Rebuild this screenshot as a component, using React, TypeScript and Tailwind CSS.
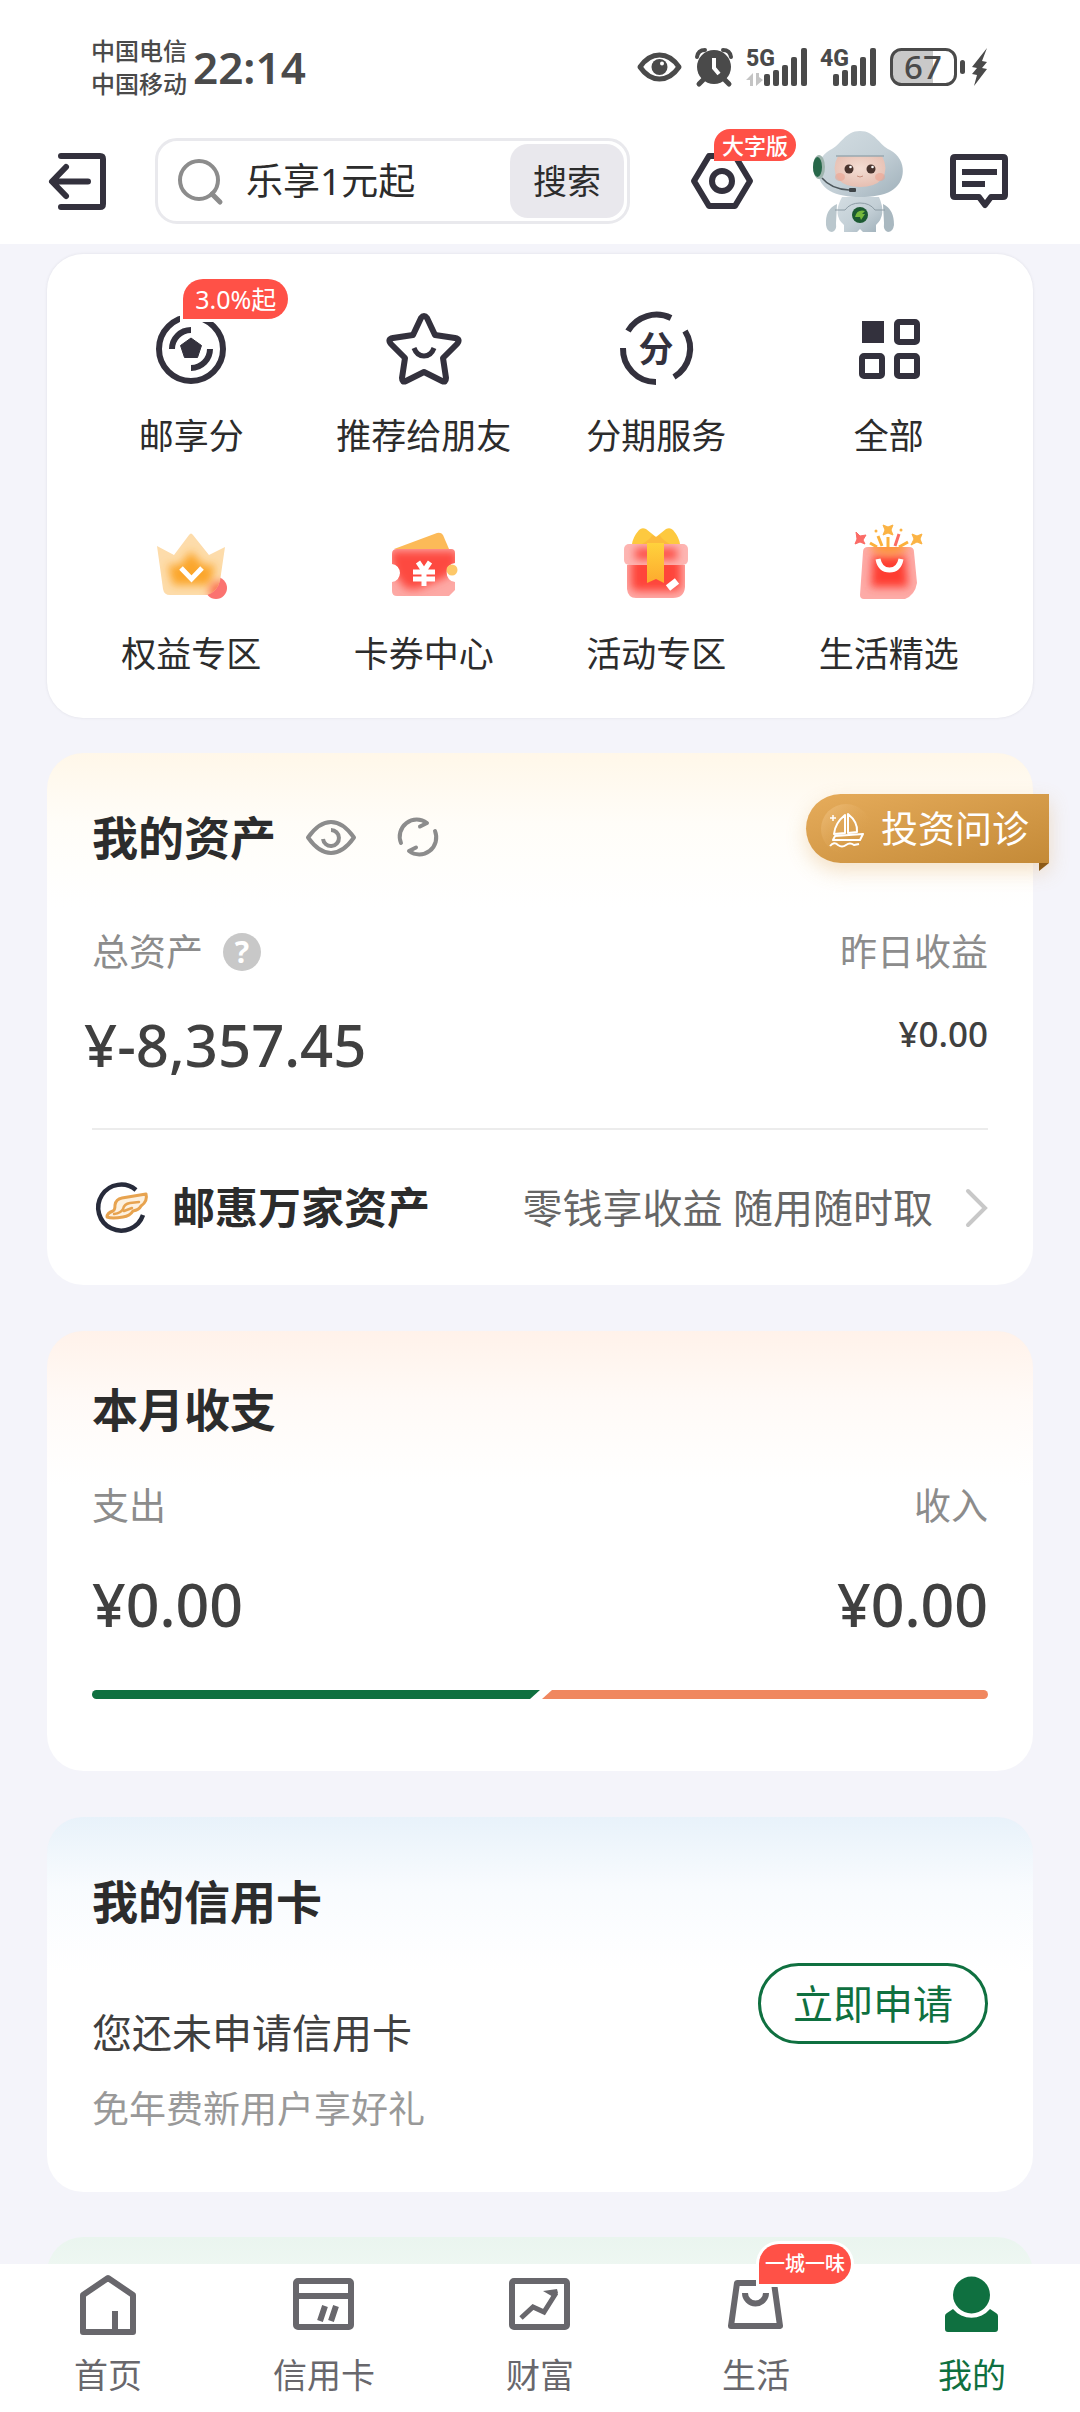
import type { ReactNode } from 'react';

const ink = '#33313d';

function Svg({ w, h, children }: { w: number; h: number; children: ReactNode }) {
    return (
        <svg width={w} height={h} viewBox={`0 0 ${w} ${h}`} fill="none" className="block shrink-0 overflow-visible" aria-hidden="true">
            {children}
        </svg>
    );
}

function Signal({ label, data }: { label: string; data?: boolean }) {
    const x = data ? 18 : 13;
    return (
        <Svg w={data ? 61 : 57} h={38}>
            <text x="0" y="18" fontSize="23" fontWeight="800" fill="#4a4a4a" className="font-['Roboto',sans-serif]">{label}</text>
            {data && <path d="M0 32L7 25V38H4V32ZM10 25V38L17 32L13 29V25Z" fill="#c4c4c4" />}
            <g fill="#4a4a4a">
                <rect x={x} y="26" width="6" height="12" rx="2" />
                <rect x={x + 9} y="22" width="6" height="16" rx="2" />
                <rect x={x + 18} y="17" width="6" height="21" rx="2" />
                <rect x={x + 27} y="9" width="6" height="29" rx="2" />
                <rect x={x + 37} y="0" width="6" height="38" rx="2" />
            </g>
        </Svg>
    );
}

function StatusBar() {
    return (
        <div className="flex h-[118px] items-center justify-between pt-4 pl-[91px] pr-[93px] text-[#4a4a4a]">
            <div className="flex items-center gap-1.5">
                <div className="text-[24px] leading-[33px] font-medium">
                    <div>中国电信</div>
                    <div>中国移动</div>
                </div>
                <time className="text-[44px] leading-[60px] font-semibold">22:14</time>
            </div>
            <div className="flex items-center gap-[13px]">
                <Svg w={45} h={30}>
                    <path d="M3 15C14 -1 31 -1 42 15C31 31 14 31 3 15Z" stroke="#4a4a4a" strokeWidth="5" strokeLinejoin="round" />
                    <circle cx="22.500" cy="15" r="8" fill="#4a4a4a" />
                    <circle cx="25" cy="11.500" r="2" fill="#fff" />
                </Svg>
                <Svg w={38} h={38}>
                    <circle cx="19" cy="19" r="17" fill="#4a4a4a" />
                    <path d="M8 32L4 36M30 32L34 36" stroke="#4a4a4a" strokeWidth="5" strokeLinecap="round" />
                    <path d="M2 9Q3 2 10 2M36 9Q35 2 28 2" stroke="#4a4a4a" strokeWidth="4" strokeLinecap="round" />
                    <path d="M19 10V20L24 26" stroke="#fff" strokeWidth="4" />
                </Svg>
                <Signal label="5G" data />
                <Signal label="4G" />
                <Svg w={97} h={38}>
                    <path d="M10 2H43V36H10Q2 36 2 28V10Q2 2 10 2Z" fill="#c9c9c9" />
                    <rect x="1.500" y="1.500" width="64" height="35" rx="10" stroke="#4a4a4a" strokeWidth="3" />
                    <text x="33" y="31" textAnchor="middle" fontSize="33" fontWeight="500" fill="#4a4a4a">67</text>
                    <rect x="70" y="12" width="5" height="14" rx="2.500" fill="#4a4a4a" />
                    <path d="M97 0L82 19L87 20L82 26L87 27L84 38L97 21L92 20L97 14L92 13Z" fill="#4a4a4a" />
                </Svg>
            </div>
        </div>
    );
}

function Robot() {
    return (
        <Svg w={90} h={101}>
            <defs>
                <linearGradient id="helmet" x1="0" y1="0" x2="1" y2="1">
                    <stop offset="0" stopColor="#d3dde2" />
                    <stop offset="0.550" stopColor="#c3cfd6" />
                    <stop offset="1" stopColor="#9fb0ba" />
                </linearGradient>
                <radialGradient id="face" cx="0.5" cy="0.4" r="0.6">
                    <stop offset="0" stopColor="#f3ddd3" />
                    <stop offset="1" stopColor="#e6bfb2" />
                </radialGradient>
            </defs>
            <path d="M24 73Q12 78 13 94Q14 101 19 101Q24 100 23 92Z" fill="#bac7cd" />
            <path d="M70 73Q81 78 81 94Q80 101 75 101Q70 100 71 92Z" fill="#a9b8c0" />
            <path d="M29 66H66Q74 84 63 94V101H50L47 98L44 101H31V94Q19 84 29 66Z" fill="url(#helmet)" />
            <path d="M22 79H32Q37 72 47 72Q57 72 62 79H72" stroke="#8d9ca5" strokeWidth="1" />
            <path d="M47 0C62 0 66 14 77 19C95 29 93 52 78 60C64 68 31 68 17 60C2 52 0 29 17 19C28 14 32 0 47 0Z" fill="url(#helmet)" />
            <path d="M25 25H69Q76 38 69 48Q62 56 47 56Q32 56 25 48Q18 38 25 25Z" fill="url(#face)" />
            <path d="M23 25H71" stroke="#99a8b1" strokeWidth="1.500" />
            <ellipse cx="27" cy="46" rx="5" ry="4" fill="#eba491" opacity="0.600" />
            <ellipse cx="67" cy="46" rx="5" ry="4" fill="#eba491" opacity="0.600" />
            <circle cx="36" cy="38" r="4.500" fill="#49342e" />
            <circle cx="58" cy="38" r="4.500" fill="#49342e" />
            <circle cx="37.500" cy="36" r="1.300" fill="#fff" />
            <circle cx="59.500" cy="36" r="1.300" fill="#fff" />
            <path d="M44 45Q47 47 50 45" stroke="#c68d7d" strokeWidth="1" />
            <ellipse cx="6" cy="36" rx="6" ry="12" fill="#9fb5ae" />
            <ellipse cx="4.500" cy="36" rx="4.500" ry="10" fill="#28684a" />
            <path d="M9 47Q18 58 36 59" stroke="#4c565b" strokeWidth="1.500" />
            <rect x="36" y="57" width="7" height="4" rx="1" fill="#3e4448" />
            <circle cx="47" cy="84" r="8" fill="#1c5a32" />
            <path d="M42 86Q44 78 52 80L49 83H52L48 89L47 86Z" fill="#74b83c" />
        </Svg>
    );
}

function Header() {
    return (
        <header className="shrink-0 bg-white">
            <StatusBar />
            <div className="flex h-[126px] items-center pl-[49px] pr-[72px]">
                <button aria-label="退出" className="mr-[49px]">
                    <Svg w={57} h={57}>
                        <path d="M12 3H51Q54 3 54 6V51Q54 54 51 54H12M39 28.500H4M17 14L3 28.500L17 43" stroke={ink} strokeWidth="6" strokeLinecap="round" strokeLinejoin="round" />
                    </Svg>
                </button>
                <form onSubmit={(e) => e.preventDefault()} className="mr-[61px] flex h-[86px] min-w-0 flex-1 items-center rounded-[22px] border-[3px] border-[#e9e9ed] pl-5 pr-[3px]">
                    <Svg w={44} h={45}>
                        <path d="M34 35L42 43" stroke="#8c8c8c" strokeWidth="5" strokeLinecap="round" />
                        <circle cx="21" cy="21" r="19" stroke="#8c8c8c" strokeWidth="4" />
                    </Svg>
                    <input
                        aria-label="搜索"
                        placeholder="乐享1元起"
                        className="ml-6 w-0 min-w-0 flex-1 bg-transparent text-[37px] leading-[52px] text-[#2c2c2c] outline-none placeholder:text-[#2c2c2c] placeholder:opacity-100"
                    />
                    <button type="submit" className="h-[74px] rounded-[18px] bg-[#e9e8ed] px-[23px] text-[34px] leading-[52px] text-[#2c2c2c]">搜索</button>
                </form>
                <button aria-label="设置" className="relative mr-[60px]">
                    <Svg w={62} h={56}>
                        <path d="M18 3H44L59 28L44 53H18L3 28Z" stroke={ink} strokeWidth="6" strokeLinejoin="round" />
                        <circle cx="31" cy="28" r="10" stroke={ink} strokeWidth="6" />
                    </Svg>
                    <span className="absolute -top-6 left-[23px] rounded-full rounded-bl-none bg-[#ff5147] px-2 text-[22px] leading-8 font-medium whitespace-nowrap text-white">大字版</span>
                </button>
                <button aria-label="客服" className="mr-[47px]">
                    <Robot />
                </button>
                <button aria-label="消息">
                    <Svg w={58} h={54}>
                        <path d="M5 3H53Q55 3 55 5V41Q55 43 53 43H41L35 51L29 43H5Q3 43 3 41V5Q3 3 5 3Z" stroke={ink} strokeWidth="6" strokeLinejoin="round" />
                        <path d="M12 18H47M12 30H35" stroke={ink} strokeWidth="6" />
                    </Svg>
                </button>
            </div>
        </header>
    );
}

const shortcuts: { label: string; badge?: string; icon: ReactNode }[] = [
    {
        label: '邮享分',
        badge: '3.0%起',
        icon: (
            <>
                <circle cx="38" cy="38" r="32" stroke={ink} strokeWidth="6" />
                <path d="M38 19A19 19 0 0 0 19 38M57 38A19 19 0 0 1 38 57" stroke={ink} strokeWidth="6" />
                <path d="M38 27L48.500 34.500L44.500 46.500H31.500L27.500 34.500Z" fill={ink} stroke={ink} strokeLinejoin="round" />
            </>
        ),
    },
    {
        label: '推荐给朋友',
        icon: (
            <>
                <path d="M35 7Q38 3 41 7L49 24L69 27Q75 28 71 33L57 47L60 67Q60 72 56 70L38 61L20 70Q16 72 16 67L19 47L5 33Q1 28 7 27L27 24Z" stroke={ink} strokeWidth="6" strokeLinejoin="round" />
                <path d="M28 37Q31 45 38 45Q45 45 48 37" stroke={ink} strokeWidth="5" />
            </>
        ),
    },
    {
        label: '分期服务',
        icon: (
            <>
                <path d="M10 20A33 33 0 0 1 53 7M67 20A33 33 0 0 1 56 66M5 37A33 33 0 0 0 38 71" stroke={ink} strokeWidth="6" />
                <text x="38" y="51" textAnchor="middle" fontSize="35" fontWeight="700" fill={ink}>分</text>
            </>
        ),
    },
    {
        label: '全部',
        icon: (
            <>
                <rect x="11" y="10" width="22" height="22" fill={ink} />
                <rect x="46" y="11" width="20" height="20" rx="2" stroke={ink} strokeWidth="6" />
                <rect x="11" y="45" width="20" height="20" rx="2" stroke={ink} strokeWidth="6" />
                <rect x="46" y="45" width="20" height="20" rx="2" stroke={ink} strokeWidth="6" />
            </>
        ),
    },
    {
        label: '权益专区',
        icon: (
            <>
                <defs>
                    <filter id="glow" x="-50%" y="-50%" width="200%" height="200%">
                        <feGaussianBlur stdDeviation="4" />
                    </filter>
                    <clipPath id="crown">
                        <path d="M4 17L21 26L36 6Q38 3 40 6L56 26L72 18L67 52Q64 63 54 66H17Q11 66 10 60Z" />
                    </clipPath>
                </defs>
                <circle cx="63" cy="59" r="11" fill="#fb7370" />
                <g clipPath="url(#crown)">
                    <rect width="76" height="76" fill="#fddcab" />
                    <path d="M38 22L50 36L62 36L57 56H20L15 36L27 36Z" fill="#fba62c" filter="url(#glow)" />
                    <circle cx="66" cy="62" r="10" fill="#fb7350" filter="url(#glow)" />
                </g>
                <path d="M28 39L38.500 50L49 39" stroke="#fff" strokeWidth="5" />
            </>
        ),
    },
    {
        label: '卡券中心',
        icon: (
            <>
                <defs>
                    <clipPath id="ticket">
                        <path d="M11 20H65Q69 20 69 24V34A8 9 0 0 0 69 53V61L63 67H11Q6 67 6 62V53A8 9 0 0 0 6 35V25Q6 20 11 20Z" />
                    </clipPath>
                </defs>
                <path d="M8 20L51 4Q55 3 57 6L63 20Z" fill="#fcba58" />
                <g clipPath="url(#ticket)">
                    <rect width="76" height="76" fill="#fda9a5" />
                    <path d="M4 22H71V38L60 48L32 60H20L8 44Z" fill="#fd4a40" filter="url(#glow)" />
                </g>
                <circle cx="66" cy="41" r="5.500" fill="#fdc869" />
                <path d="M32 33L38 42L44 33M27 43H49M27 50H49M38 42V57" stroke="#fff" strokeWidth="5" />
            </>
        ),
    },
    {
        label: '活动专区',
        icon: (
            <>
                <defs>
                    <clipPath id="gift">
                        <path d="M9 36H67V58Q66 69 55 69H18Q10 69 9 60Z" />
                    </clipPath>
                    <clipPath id="lid">
                        <rect x="6" y="15" width="64" height="21" rx="5" />
                    </clipPath>
                    <linearGradient id="ribbon" x1="0" y1="0" x2="0" y2="1">
                        <stop offset="0" stopColor="#ffd23c" />
                        <stop offset="1" stopColor="#fdaa2e" />
                    </linearGradient>
                </defs>
                <path d="M14 15Q15 8 21 1Q24 -2 28 0L38 8L48 0Q52 -2 55 1Q61 8 62 15Z" fill="#fdc93f" />
                <path d="M24 15Q33 10 34 6L38 8L42 6Q43 10 52 15Z" fill="#fbb03b" opacity="0.600" />
                <g clipPath="url(#gift)">
                    <rect width="76" height="76" fill="#fea9a5" />
                    <rect x="13" y="28" width="50" height="34" rx="6" fill="#fe453b" filter="url(#glow)" />
                </g>
                <g clipPath="url(#lid)">
                    <rect y="10" width="76" height="30" fill="#fdb6b3" />
                    <rect x="17" y="19" width="42" height="12" fill="#fd4f46" filter="url(#glow)" />
                </g>
                <path d="M29 14H46V54L38 50L29 54Z" fill="url(#ribbon)" />
                <path d="M50 59L59 52" stroke="#fff" strokeWidth="7" />
            </>
        ),
    },
    {
        label: '生活精选',
        icon: (
            <>
                <defs>
                    <clipPath id="bag">
                        <path d="M17 18H58Q63 18 63 23L66 54Q64 66 54 70H13Q9 70 9 66L12 23Q12 18 17 18Z" />
                    </clipPath>
                </defs>
                <path d="M27 7L31 17M37 8V18M19 14L26 18M57 13L48 18" stroke="#fbb13c" strokeWidth="3" />
                <path d="M48 5L44 17" stroke="#fb6a63" strokeWidth="3" />
                <path d="M32 -4L37 -2L42 -4L40 1L42 6L37 4L32 6L34 1Z" fill="#fbb344" stroke="#fbb344" strokeLinejoin="round" />
                <path d="M5 3L9 7L15 6L12 11L14 15L9 13L4 15L6 10Z" fill="#fb6b66" stroke="#fb6b66" strokeLinejoin="round" />
                <path d="M61 5L66 7L71 5L69 10L71 15L66 13L60 16L63 10Z" fill="#fbb344" stroke="#fbb344" strokeLinejoin="round" />
                <circle cx="25" cy="2" r="1.500" fill="#fbb344" />
                <circle cx="50" cy="1" r="1.500" fill="#fbb344" />
                <g clipPath="url(#bag)">
                    <rect y="10" width="76" height="66" fill="#fdaba7" />
                    <path d="M22 26H54L57 58H20Z" fill="#fe3d32" filter="url(#glow)" />
                    <ellipse cx="38" cy="18" rx="18" ry="9" fill="#fd9640" filter="url(#glow)" />
                </g>
                <path d="M27 30Q29 41 38.500 41Q48 41 50 30" stroke="#fff" strokeWidth="5" />
            </>
        ),
    },
];

function Shortcuts() {
    return (
        <section className="mt-2.5 grid grid-cols-4 gap-y-[69px] rounded-[36px] bg-white px-7 pt-[57px] pb-10 shadow-[0_0_3px_#dedee6]">
            {shortcuts.map((item) => (
                <a key={item.label} href="#" className="flex flex-col items-center gap-6">
                    <span className="relative">
                        <Svg w={76} h={76}>{item.icon}</Svg>
                        {item.badge && (
                            <span className="absolute -top-8 left-[30px] rounded-full rounded-bl-none bg-[#ff5147] px-3 text-[25px] leading-10 whitespace-nowrap text-white ring-[3px] ring-white">{item.badge}</span>
                        )}
                    </span>
                    <span className="text-[35px] leading-[49px] whitespace-nowrap">{item.label}</span>
                </a>
            ))}
        </section>
    );
}

function Assets() {
    return (
        <section className="relative mt-[35px] rounded-[36px] bg-white bg-[linear-gradient(#fff7e9,#fffdf8_70px,#fff_155px)] px-[45px] pt-[54px]">
            <div className="flex items-center">
                <h2 className="text-[46px] leading-[60px] font-bold">我的资产</h2>
                <button aria-label="隐藏金额" className="ml-[29px]">
                    <Svg w={52} h={37}>
                        <path d="M3 18.500Q14 3 26 3Q38 3 49 18.500Q38 34 26 34Q14 34 3 18.500Z" stroke="#8c8c8c" strokeWidth="4" strokeLinejoin="round" />
                        <path d="M26 11A8 8 0 1 1 18 20" stroke="#8c8c8c" strokeWidth="4" />
                    </Svg>
                </button>
                <button aria-label="刷新" className="ml-[41px]">
                    <Svg w={40} h={38}>
                        <path d="M3 25A17 17 0 0 1 29 5L22 8.500M37 13A17 17 0 0 1 11 33L18 29.500" stroke="#8c8c8c" strokeWidth="4" strokeLinecap="round" strokeLinejoin="round" />
                    </Svg>
                </button>
            </div>
            <button className="absolute top-[41px] -right-4 flex h-[69px] items-center gap-2.5 rounded-l-full bg-linear-to-br from-[#e6ac5b] to-[#c48a37] pr-5 pl-[15px] text-[37px] leading-[52px] whitespace-nowrap text-white shadow-[0_8px_20px_rgba(220,160,80,0.3)]">
                <Svg w={50} h={50}>
                    <defs>
                        <linearGradient id="disc" x1="0" y1="0" x2="1" y2="1">
                            <stop offset="0" stopColor="#f3c78a" stopOpacity="0.700" />
                            <stop offset="0.700" stopColor="#e0a654" stopOpacity="0" />
                        </linearGradient>
                    </defs>
                    <circle cx="25" cy="25" r="25" fill="url(#disc)" />
                    <path d="M12 36H39L42 30L14 32ZM24 11Q14 19 13 30L24 29ZM27 10Q37 18 36 28L27 29ZM9 42Q13 37 17 41Q21 44 25 41Q29 38 33 41L38 40" stroke="#fff" strokeWidth="2" strokeLinejoin="round" />
                    <path d="M12 11V17M9 14H15" stroke="#fff" strokeWidth="1.500" />
                </Svg>
                投资问诊
                <span className="absolute top-full right-0 h-2 w-2.5 bg-[#8c5a17] [clip-path:polygon(0_0,100%_0,0_100%)]" />
            </button>
            <div className="mt-[59px] flex justify-between">
                <div>
                    <div className="flex items-center gap-5 text-[37px] leading-[52px] text-[#8c8c8c]">
                        总资产
                        <button aria-label="说明" className="h-[38px] w-[38px] rounded-full bg-[#c8c8c8] text-[30px] leading-[38px] font-bold text-white">?</button>
                    </div>
                    <button className="-mx-2 mt-8 block text-[58px] leading-[70px] font-medium text-[#404040]">¥-8,357.45</button>
                </div>
                <div className="text-right">
                    <div className="text-[37px] leading-[52px] text-[#8c8c8c]">昨日收益</div>
                    <div className="mt-[30px] text-[35px] leading-[52px] font-medium text-[#404040]">¥0.00</div>
                </div>
            </div>
            <a href="#" className="mt-12 flex h-[157px] items-center border-t-2 border-[#ececec]">
                <span className="ml-1">
                    <Svg w={52} h={50}>
                        <path d="M40 7A23 23 0 1 0 47 32" stroke="#272b3b" strokeWidth="4.500" />
                        <path d="M11 34Q11 30 17 28Q19 27 19 22Q20 16 26 15L50 11Q52 18 45 23Q43 27 37 28Q34 33 27 34Q16 36 11 34Z" fill="#fdf1df" stroke="#e7a34f" strokeWidth="3" strokeLinejoin="round" />
                        <path d="M18 31Q25 30 27 26Q28 21 34 20L43 19M28 28L36 25" stroke="#e7a34f" strokeWidth="2.500" strokeLinecap="round" />
                    </Svg>
                </span>
                <span className="ml-6 text-[43px] leading-[60px] font-bold">邮惠万家资产</span>
                <span className="ml-auto text-[40px] leading-[60px] text-[#666]">零钱享收益 随用随时取</span>
                <span className="ml-[33px]">
                    <Svg w={22} h={38}>
                        <path d="M2 2L19 19L2 36" stroke="#c8c8c8" strokeWidth="4" strokeLinecap="round" />
                    </Svg>
                </span>
            </a>
        </section>
    );
}

function Monthly() {
    return (
        <section className="mt-[46px] rounded-[36px] bg-white bg-[linear-gradient(#fff2ea,#fffaf7_70px,#fff_155px)] px-[45px] pt-12 pb-[72px]">
            <h2 className="text-[46px] leading-[60px] font-bold">本月收支</h2>
            <div className="mt-[41px] flex justify-between text-[37px] leading-[52px] text-[#8c8c8c]">
                <span>支出</span>
                <span>收入</span>
            </div>
            <div className="mt-[37px] flex justify-between text-[59px] leading-[70px] font-medium text-[#404040]">
                <span>¥0.00</span>
                <span>¥0.00</span>
            </div>
            <div className="mt-[51px] flex h-[9px]">
                <div className="flex-1 rounded-l-full bg-[#0f7040] [clip-path:polygon(0_0,100%_0,calc(100%-10px)_100%,0_100%)]" />
                <div className="flex-1 rounded-r-full bg-[#f0875f] [clip-path:polygon(12px_0,100%_0,100%_100%,2px_100%)]" />
            </div>
        </section>
    );
}

function CreditCard() {
    return (
        <section className="mt-[46px] rounded-[36px] bg-white bg-[linear-gradient(#e8f2fa,#f8fbfe_70px,#fff_155px)] px-[45px] pt-[54px] pb-[57px]">
            <h2 className="text-[46px] leading-[60px] font-bold">我的信用卡</h2>
            <div className="mt-8 flex items-start justify-between">
                <div className="pt-11">
                    <p className="text-[40px] leading-[52px] text-[#404040]">您还未申请信用卡</p>
                    <p className="mt-6 text-[37px] leading-[52px] text-[#999]">免年费新用户享好礼</p>
                </div>
                <button className="rounded-full border-[3px] border-[#0f7040] px-8 py-[11px] text-[40px] leading-[53px] text-[#0f7040]">立即申请</button>
            </div>
        </section>
    );
}

const grey = '#68676c';

const tabs: { label: string; badge?: string; active?: boolean; icon: ReactNode }[] = [
    {
        label: '首页',
        icon: (
            <>
                <path d="M31 5L56 22V59H6V22Z" stroke={grey} strokeWidth="6" strokeLinejoin="round" />
                <path d="M38 38V57" stroke={grey} strokeWidth="6" />
            </>
        ),
    },
    {
        label: '信用卡',
        icon: (
            <>
                <rect x="3" y="8" width="55" height="46" rx="2" stroke={grey} strokeWidth="6" />
                <path d="M3 23H58M32 33L27 48M43 33L38 48" stroke={grey} strokeWidth="6" />
            </>
        ),
    },
    {
        label: '财富',
        icon: (
            <>
                <rect x="3" y="8" width="55" height="46" rx="2" stroke={grey} strokeWidth="6" />
                <path d="M12 45L24 34L35 39L47 20" stroke={grey} strokeWidth="5" />
                <path d="M34 18L48 16L49 20L46 25Z" fill={grey} />
            </>
        ),
    },
    {
        label: '生活',
        badge: '一城一味',
        icon: (
            <>
                <path d="M12 10H49L55 53H6Z" stroke={grey} strokeWidth="6" strokeLinejoin="round" />
                <path d="M20 20A10 10 0 0 0 41 20" stroke={grey} strokeWidth="6" />
            </>
        ),
    },
    {
        label: '我的',
        active: true,
        icon: (
            <>
                <path d="M12 36A24 24 0 0 0 49 36L55 40Q57 41 57 43V56Q57 59 54 59H7Q4 59 4 56V43Q4 41 6 40Z" fill="#0f7040" />
                <circle cx="30.500" cy="22" r="18.500" fill="#0f7040" />
            </>
        ),
    },
];

function TabBar() {
    return (
        <nav className="relative z-10 grid shrink-0 grid-cols-5 bg-white pt-[9px] pb-[13px]">
            {tabs.map((tab) => (
                <a key={tab.label} href="#" aria-current={tab.active ? 'page' : undefined} className={tab.active ? 'flex flex-col items-center gap-4 text-[#0f7040]' : 'flex flex-col items-center gap-4 text-[#68676c]'}>
                    <span className="relative">
                        <Svg w={62} h={62}>{tab.icon}</Svg>
                        {tab.badge && (
                            <span className="absolute -top-[29px] left-[34px] rounded-full rounded-bl-none bg-[#ff5147] px-1.5 text-[20px] leading-10 font-medium whitespace-nowrap text-white ring-[3px] ring-white">{tab.badge}</span>
                        )}
                    </span>
                    <span className="text-[34px] leading-[48px]">{tab.label}</span>
                </a>
            ))}
        </nav>
    );
}

export default function App() {
    return (
        <div className="flex h-screen flex-col bg-[#f4f4fa] font-['Noto_Sans','Noto_Sans_CJK_SC',sans-serif] text-[#2c2c2c]">
            <Header />
            <main className="min-h-0 flex-1 overflow-hidden px-[47px]">
                <Shortcuts />
                <Assets />
                <Monthly />
                <CreditCard />
                <section className="mt-[45px] h-40 rounded-[36px] bg-linear-to-b from-[#eaf5ef] to-white" />
            </main>
            <TabBar />
        </div>
    );
}
